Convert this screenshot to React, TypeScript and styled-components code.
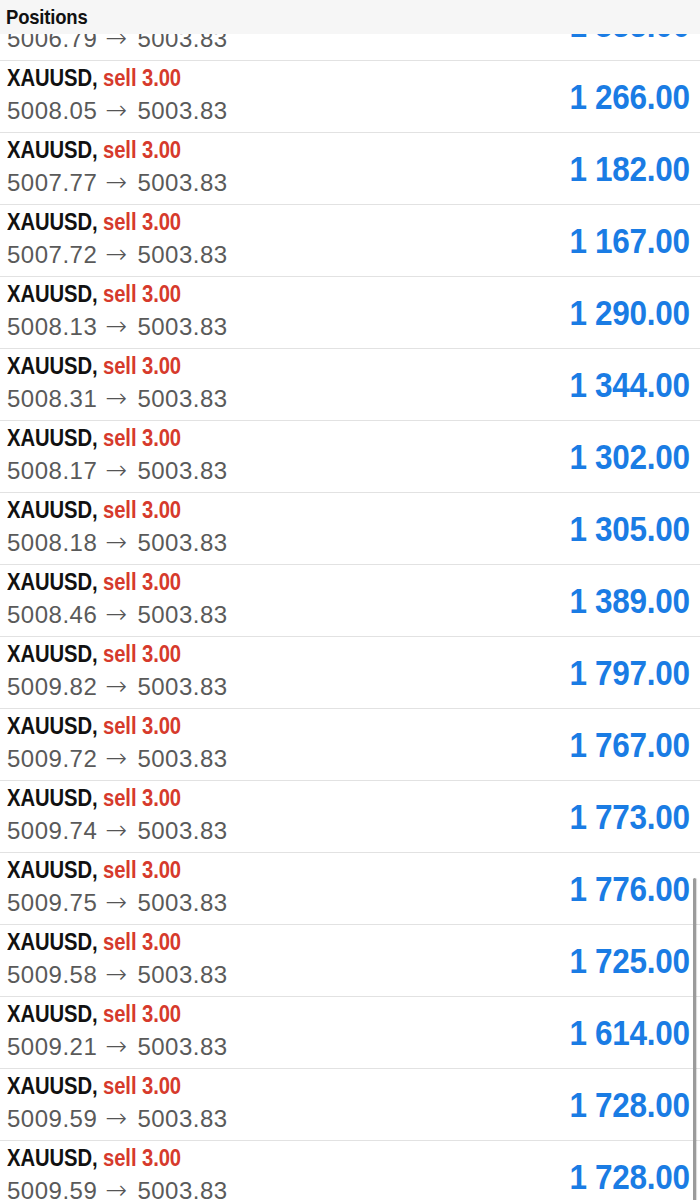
import React from "react";
import styled, { createGlobalStyle } from "styled-components";

const GlobalStyle = createGlobalStyle`
  html, body {
    margin: 0;
    padding: 0;
    background: #ffffff;
  }
  body {
    font-family: "Liberation Sans", Arial, sans-serif;
    -webkit-font-smoothing: antialiased;
  }
`;

const Screen = styled.div`
  position: relative;
  width: 700px;
  height: 1200px;
  overflow: hidden;
  background: #ffffff;
`;

const Header = styled.div`
  position: absolute;
  top: 0;
  left: 0;
  right: 0;
  height: 34px;
  background: #f6f6f6;
  display: flex;
  align-items: center;
  padding: 0 6px;
  z-index: 2;
`;

const Title = styled.h1`
  display: inline-block;
  margin: 0;
  font-size: 21px;
  font-weight: 700;
  letter-spacing: -0.2px;
  color: #111111;
  transform: scaleX(0.88);
  transform-origin: left center;
`;

const List = styled.ul`
  list-style: none;
  margin: -11px 0 0 0;
  padding: 0;
`;

const Row = styled.li`
  box-sizing: border-box;
  height: 72px;
  display: flex;
  align-items: center;
  justify-content: space-between;
  padding: 0 10px 0 7px;
  border-bottom: 1px solid #e2e2e2;
`;

const Info = styled.div`
  display: flex;
  flex-direction: column;
  align-items: flex-start;
  align-self: flex-start;
  padding-top: 4px;
`;

const Instrument = styled.div`
  display: inline-block;
  font-size: 23px;
  line-height: 26px;
  font-weight: 700;
  letter-spacing: -0.1px;
  color: #111111;
  white-space: nowrap;
  transform: scaleX(0.88);
  transform-origin: left center;
`;

const Side = styled.span`
  color: #d63a2c;
`;

const Prices = styled.div`
  margin-top: 5px;
  font-size: 24px;
  line-height: 30px;
  letter-spacing: 0.5px;
  color: #5a5a5a;
  white-space: nowrap;
`;

const Arrow = styled.span`
  display: inline-block;
  font-family: "DejaVu Sans", sans-serif;
  font-weight: 200;
  font-size: 26px;
  line-height: 24px;
  letter-spacing: 0;
  margin: 0 3px 0 1px;
  color: #555555;
`;

const Profit = styled.div`
  display: inline-block;
  font-size: 35px;
  font-weight: 700;
  letter-spacing: -0.3px;
  color: #1a7ce4;
  white-space: nowrap;
  transform: scaleX(0.9);
  transform-origin: right center;
`;

const ScrollThumb = styled.div`
  position: absolute;
  top: 878px;
  right: 4px;
  width: 3px;
  height: 330px;
  border-radius: 2px;
  background: #9b9b9b;
  box-shadow: 1px 0 1px rgba(0, 0, 0, 0.15);
  z-index: 3;
`;

type Position = {
  open: string;
  profit: string;
};

const positions: Position[] = [
  { open: "5006.79", profit: "1 355.00" },
  { open: "5008.05", profit: "1 266.00" },
  { open: "5007.77", profit: "1 182.00" },
  { open: "5007.72", profit: "1 167.00" },
  { open: "5008.13", profit: "1 290.00" },
  { open: "5008.31", profit: "1 344.00" },
  { open: "5008.17", profit: "1 302.00" },
  { open: "5008.18", profit: "1 305.00" },
  { open: "5008.46", profit: "1 389.00" },
  { open: "5009.82", profit: "1 797.00" },
  { open: "5009.72", profit: "1 767.00" },
  { open: "5009.74", profit: "1 773.00" },
  { open: "5009.75", profit: "1 776.00" },
  { open: "5009.58", profit: "1 725.00" },
  { open: "5009.21", profit: "1 614.00" },
  { open: "5009.59", profit: "1 728.00" },
  { open: "5009.59", profit: "1 728.00" },
];

const App: React.FC = () => {
  return (
    <>
      <GlobalStyle />
      <Screen>
        <Header>
          <Title>Positions</Title>
        </Header>
        <List>
          {positions.map((p, i) => (
            <Row key={i}>
              <Info>
                <Instrument>
                  XAUUSD, <Side>sell 3.00</Side>
                </Instrument>
                <Prices>
                  {p.open} <Arrow>→</Arrow> 5003.83
                </Prices>
              </Info>
              <Profit>{p.profit}</Profit>
            </Row>
          ))}
        </List>
        <ScrollThumb />
      </Screen>
    </>
  );
};

export default App;
